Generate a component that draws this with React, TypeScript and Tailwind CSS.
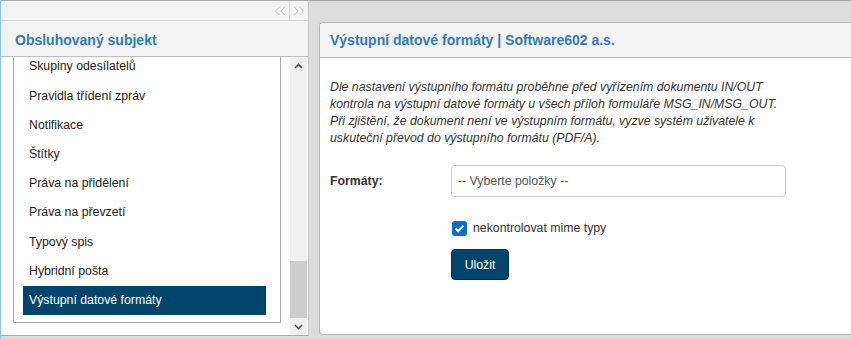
import { ChevronsLeft, ChevronsRight } from "lucide-react";

const items = [
  "Skupiny odesílatelů",
  "Pravidla třídení zpráv",
  "Notifikace",
  "Štítky",
  "Práva na přidělení",
  "Práva na převzetí",
  "Typový spis",
  "Hybridní pošta",
  "Výstupní datové formáty",
];

const selected = "Výstupní datové formáty";

const ScrollArrow = ({ up }: { up?: boolean }) => (
  <svg width="9" height="6" viewBox="0 0 9 6" className="text-[#505050]">
    <path
      d={up ? "M1 5 L4.5 1.5 L8 5" : "M1 1 L4.5 4.5 L8 1"}
      fill="none"
      stroke="currentColor"
      strokeWidth="1.6"
    />
  </svg>
);

const Sidebar = () => (
  <div className="w-[308px] h-[336px] flex flex-col bg-white border-t border-r border-b border-t-[#a9a9a9] border-r-[#c4c4c4] border-b-[#a9a9a9]">
    <div className="h-[20px] bg-[#f3f3f3] border-b border-[#d4d4d4] flex justify-end">
      <button className="w-[18px] h-full flex items-center justify-center text-[#b3b3b3]">
        <ChevronsLeft size={18} strokeWidth={1.2} />
      </button>
      <div className="w-px h-full bg-[#d8d8d8]" />
      <button className="w-[18px] h-full flex items-center justify-center text-[#b3b3b3]">
        <ChevronsRight size={18} strokeWidth={1.2} />
      </button>
    </div>
    <div className="h-[36px] bg-[#f3f3f3] border-b border-[#bdbdbd] flex items-center pl-[14px] pt-[3px]">
      <h2 className="text-[14px] font-bold text-[#337ab7]">Obsluhovaný subjekt</h2>
    </div>
    <div className="flex-1 flex">
      <div className="ml-[12px] w-[268px] h-[266px] border-l border-r border-b border-[#a9a9a9] overflow-hidden">
        <ul className="-mt-[5px] pl-[9px] pr-[14px]">
          {items.map((item) => (
            <li
              key={item}
              className={`h-[29.2px] flex items-center pl-[6px] text-[12.3px] ${
                item === selected ? "bg-[#02456c] text-white" : "text-[#222]"
              }`}
            >
              {item}
            </li>
          ))}
        </ul>
      </div>
      <div className="ml-[9px] w-[17px] flex flex-col bg-[#f0f0f0]">
        <div className="h-[17px] flex items-center justify-center">
          <ScrollArrow up />
        </div>
        <div className="flex-1 flex flex-col justify-end">
          <div className="h-[57px] bg-[#cdcdcd]" />
        </div>
        <div className="h-[17px] flex items-center justify-center">
          <ScrollArrow />
        </div>
      </div>
    </div>
  </div>
);

const Detail = () => (
  <div className="flex-1 flex flex-col border-t border-[#a9a9a9] pl-[10px] pt-[21px]">
    <div className="h-[313px] flex flex-col bg-white border border-r-0 border-[#b4b4b4] rounded-l-[4px] overflow-hidden">
      <div className="h-[35px] bg-[#f3f3f3] border-b border-[#b4b4b4] flex items-center pl-[10px]">
        <h1 className="text-[14px] font-bold text-[#337ab7]">
          Výstupní datové formáty | Software602 a.s.
        </h1>
      </div>
      <div className="pl-[10px] pt-[21px]">
        <p className="text-[12.3px] leading-[17px] italic text-[#333] w-[450px]">
          Dle nastavení výstupního formátu proběhne před vyřízením dokumentu IN/OUT
          <br />
          kontrola na výstupní datové formáty u všech příloh formuláře MSG_IN/MSG_OUT.
          <br />
          Při zjištění, že dokument není ve výstupním formátu, vyzve systém uživatele k
          <br />
          uskuteční převod do výstupního formátu (PDF/A).
        </p>
        <div className="mt-[18px] flex items-center">
          <label className="w-[121px] text-[12.3px] font-bold text-[#333]">Formáty:</label>
          <div className="w-[335px] h-[32px] border border-[#cccccc] rounded-[4px] flex items-center pl-[6px] text-[12.3px] text-[#555]">
            -- Vyberte položky --
          </div>
        </div>
        <div className="ml-[122px] mt-[22px] flex items-center gap-[6px]">
          <span className="w-[15px] h-[15px] rounded-[3px] bg-[#0d6ad8] flex items-center justify-center">
            <svg width="11" height="9" viewBox="0 0 11 9">
              <path d="M1.5 4.5 L4.2 7.2 L9.5 1.6" fill="none" stroke="white" strokeWidth="2" />
            </svg>
          </span>
          <span className="text-[12.3px] text-[#333]">nekontrolovat mime typy</span>
        </div>
        <button className="ml-[121px] mt-[12px] w-[58px] h-[31px] rounded-[4px] bg-[#02456c] border border-[#01324f] text-white text-[12.3px]">
          Uložit
        </button>
      </div>
    </div>
  </div>
);

export default function App() {
  return (
    <div
      className="w-[851px] h-[339px] flex bg-[#dcdcdc] overflow-hidden"
      style={{ fontFamily: '"Liberation Sans", Arial, sans-serif' }}
    >
      <div className="w-px h-full bg-[#8dc3ee]" />
      <Sidebar />
      <Detail />
    </div>
  );
}
